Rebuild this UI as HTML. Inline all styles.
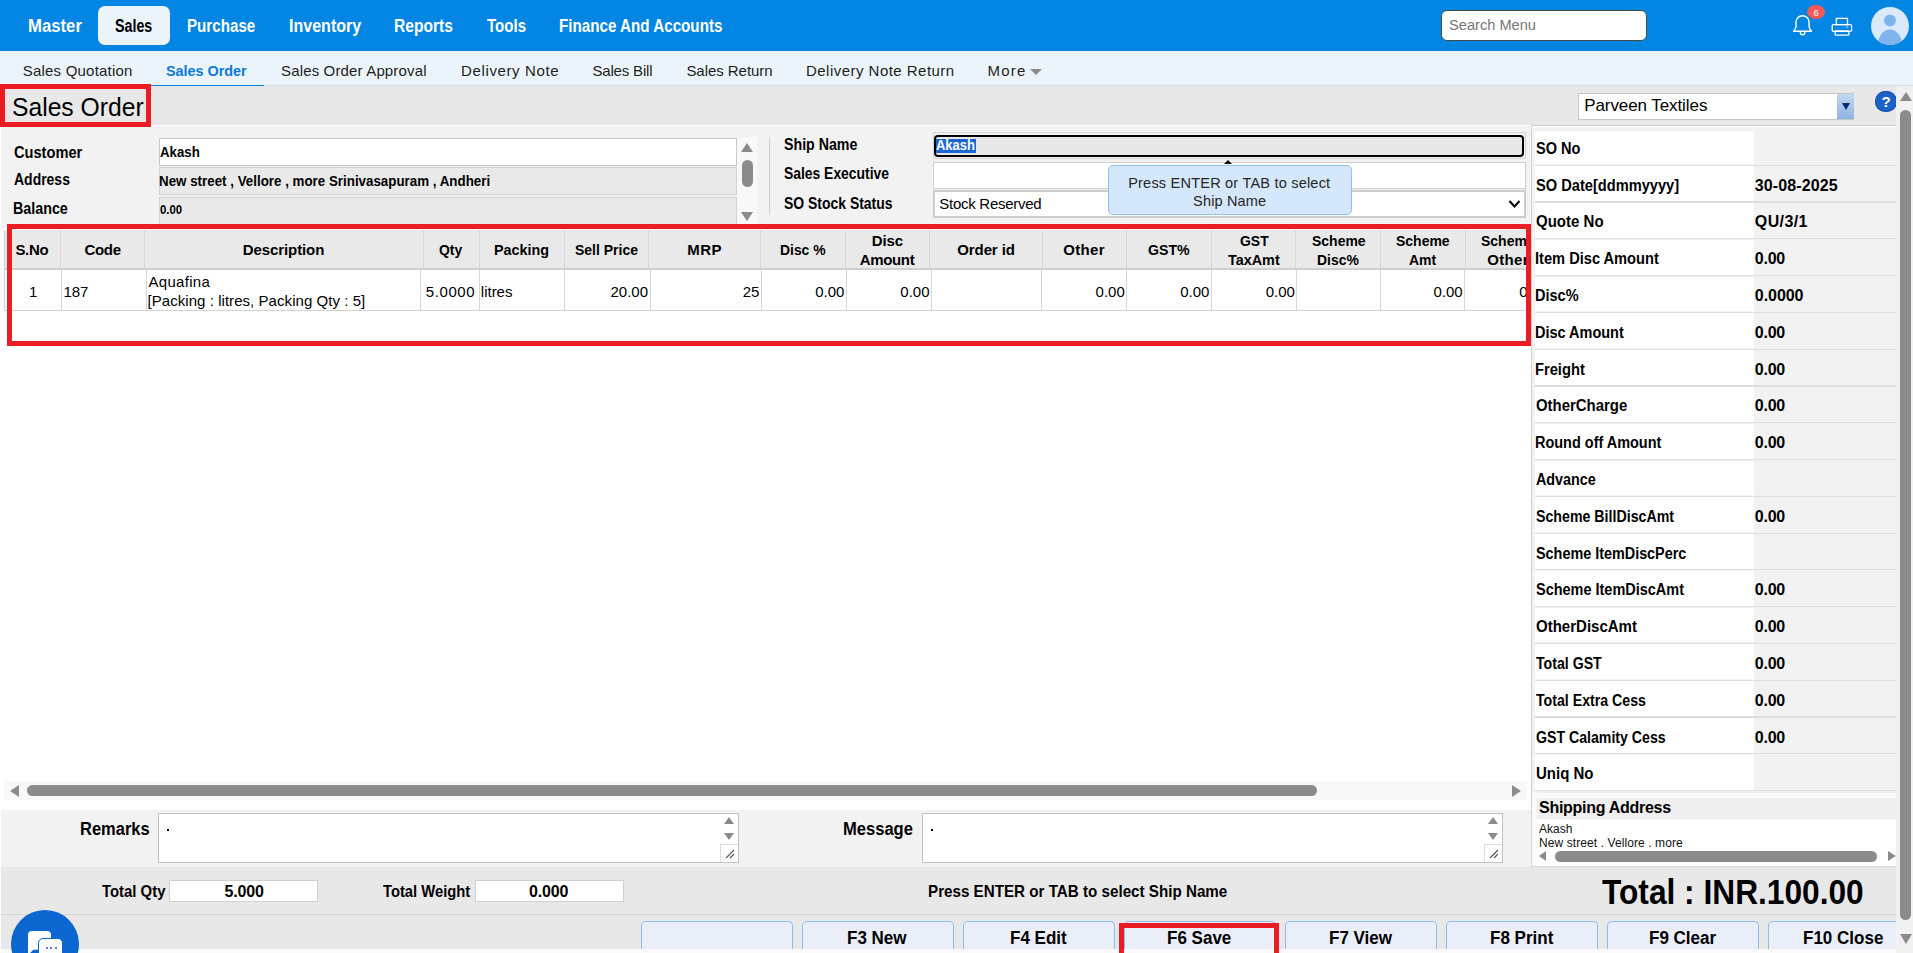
<!DOCTYPE html>
<html><head><meta charset="utf-8"><title>Sales Order</title>
<style>
html,body{margin:0;padding:0;width:1913px;height:953px;overflow:hidden;background:#fff;font-family:'Liberation Sans',sans-serif;}
#root{position:relative;width:1913px;height:953px;overflow:hidden;}
#root div,#root svg{position:absolute;box-sizing:border-box;}
.t{position:absolute;white-space:pre;line-height:1;}
</style></head><body><div id="root">
<div style="left:0px;top:0px;width:1913px;height:51px;background:#0285e3"></div>
<div style="left:98px;top:6px;width:72px;height:39px;background:#ebf3fb;border-radius:7px"></div>
<span class="t" style="left:27.57px;top:17.00px;font:700 18px/1 'Liberation Sans';color:#fff;transform:scaleX(0.9295);transform-origin:0 0;">Master</span>
<span class="t" style="left:115.40px;top:17.00px;font:700 18px/1 'Liberation Sans';color:#000;transform:scaleX(0.7931);transform-origin:0 0;">Sales</span>
<span class="t" style="left:187.06px;top:17.00px;font:700 18px/1 'Liberation Sans';color:#fff;transform:scaleX(0.8422);transform-origin:0 0;">Purchase</span>
<span class="t" style="left:288.81px;top:17.00px;font:700 18px/1 'Liberation Sans';color:#fff;transform:scaleX(0.8912);transform-origin:0 0;">Inventory</span>
<span class="t" style="left:394.13px;top:17.00px;font:700 18px/1 'Liberation Sans';color:#fff;transform:scaleX(0.8657);transform-origin:0 0;">Reports</span>
<span class="t" style="left:487.00px;top:17.00px;font:700 18px/1 'Liberation Sans';color:#fff;transform:scaleX(0.8360);transform-origin:0 0;">Tools</span>
<span class="t" style="left:559.16px;top:17.00px;font:700 18px/1 'Liberation Sans';color:#fff;transform:scaleX(0.8438);transform-origin:0 0;">Finance And Accounts</span>
<div style="left:1441px;top:10px;width:206px;height:31px;background:#fff;border:1px solid #3d4d45;border-radius:6px"></div>
<span class="t" style="left:1448.60px;top:17.00px;font:400 15.5px/1 'Liberation Sans';color:#767676;transform:scaleX(0.9435);transform-origin:0 0;">Search Menu</span>
<svg style="left:1790px;top:12px" width="26" height="26" viewBox="0 0 26 26"><path d="M3.6 19.2 L21.6 19.2 Q19.3 16.8 19.1 14.5 L19.1 10.2 A6.55 6.55 0 0 0 6.0 10.2 L6.0 14.5 Q5.8 16.8 3.6 19.2 Z" fill="none" stroke="#fff" stroke-width="1.45" stroke-linejoin="round"/><path d="M10.4 19.6 L10.4 20.6 A2.2 2.2 0 0 0 14.8 20.6 L14.8 19.6" fill="none" stroke="#fff" stroke-width="1.4"/></svg>
<div style="left:1807px;top:4.8px;width:18px;height:14px;background:#f25858;border-radius:50%"></div>
<span class="t" style="left:1813.50px;top:8.00px;font:400 9.5px/1 'Liberation Sans';color:#fff;">6</span>
<svg style="left:1831px;top:17px" width="22" height="20" viewBox="0 0 22 20"><rect x="5.3" y="1.4" width="11.2" height="6.2" fill="none" stroke="#fff" stroke-width="1.3"/><rect x="1.2" y="7.6" width="19.4" height="6.8" rx="1.5" fill="none" stroke="#fff" stroke-width="1.3"/><rect x="4.2" y="13.9" width="13.6" height="4.3" rx="0.8" fill="none" stroke="#fff" stroke-width="1.3"/><rect x="15.2" y="9.4" width="2" height="1.2" fill="#fff" opacity="0.7"/></svg>
<div style="left:1871px;top:6.7px;width:38px;height:38px;border-radius:50%;overflow:hidden;background:#dae9fb"><svg style="left:0;top:0" width="38" height="38" viewBox="0 0 38 38"><circle cx="19" cy="13.5" r="5.9" fill="#7fb4ee"/><ellipse cx="19" cy="37.5" rx="12" ry="15" fill="#7fb4ee"/></svg></div>
<div style="left:0px;top:51px;width:1913px;height:35px;background:#ecf4fb;border-bottom:1px solid #d2dde8"></div>
<div style="left:151px;top:84.6px;width:113px;height:2.8px;background:#0a84e2"></div>
<span class="t" style="left:22.80px;top:63.00px;font:400 15px/1 'Liberation Sans';color:#1e1e1e;letter-spacing:0.200px;">Sales Quotation</span>
<span class="t" style="left:166.20px;top:63.00px;font:700 15px/1 'Liberation Sans';color:#0a7ad9;transform:scaleX(0.9576);transform-origin:0 0;">Sales Order</span>
<span class="t" style="left:281.00px;top:63.00px;font:400 15px/1 'Liberation Sans';color:#1e1e1e;letter-spacing:0.154px;">Sales Order Approval</span>
<span class="t" style="left:461.00px;top:63.00px;font:400 15px/1 'Liberation Sans';color:#1e1e1e;letter-spacing:0.634px;">Delivery Note</span>
<span class="t" style="left:592.40px;top:63.00px;font:400 15px/1 'Liberation Sans';color:#1e1e1e;letter-spacing:-0.162px;">Sales Bill</span>
<span class="t" style="left:686.40px;top:63.00px;font:400 15px/1 'Liberation Sans';color:#1e1e1e;letter-spacing:-0.043px;">Sales Return</span>
<span class="t" style="left:806.00px;top:63.00px;font:400 15px/1 'Liberation Sans';color:#1e1e1e;letter-spacing:0.470px;">Delivery Note Return</span>
<span class="t" style="left:987.50px;top:63.00px;font:400 15px/1 'Liberation Sans';color:#1e1e1e;letter-spacing:1.222px;">More</span>
<div style="left:1030px;top:68.5px;width:0px;height:0px;border-left:6.5px solid transparent;border-right:6.5px solid transparent;border-top:6px solid #8c8c8c"></div>
<div style="left:0px;top:86px;width:1896px;height:39px;background:#e8e8e8"></div>
<span class="t" style="left:12.35px;top:94.00px;font:400 26px/1 'Liberation Sans';color:#000;transform:scaleX(0.9488);transform-origin:0 0;">Sales Order</span>
<div style="left:1578px;top:92.5px;width:276px;height:27px;background:#fff;border:1px solid #c6c6c6"></div>
<div style="left:1837px;top:93.5px;width:16.5px;height:25.5px;background:linear-gradient(#c2d8f1,#8db4e2)"></div>
<div style="left:1841.6px;top:103px;width:0px;height:0px;border-left:4.0px solid transparent;border-right:4.0px solid transparent;border-top:7px solid #0c2a6e"></div>
<span class="t" style="left:1584.20px;top:97.00px;font:400 17px/1 'Liberation Sans';color:#000;letter-spacing:-0.082px;">Parveen Textiles</span>
<div style="left:1875.2px;top:90.6px;width:21.4px;height:21.4px;background:#1d62c6;border-radius:50%;box-shadow:inset 0 0 0 1px #1652ad"></div>
<span class="t" style="left:1881.50px;top:94.00px;font:700 15px/1 'Liberation Sans';color:#fff;">?</span>
<div style="left:1px;top:125.5px;width:1530px;height:102px;background:#f2f2f2"></div>
<div style="left:159px;top:138px;width:578px;height:27.5px;background:#fff;border:1px solid #c9c9c9"></div>
<div style="left:159px;top:167.3px;width:578px;height:27.3px;background:#e9e9e9;border:1px solid #d3d3d3"></div>
<div style="left:159px;top:196.5px;width:578px;height:31px;background:#e9e9e9;border:1px solid #d3d3d3"></div>
<div style="left:737px;top:136.6px;width:20px;height:91px;background:#f8f8f8"></div>
<div style="left:741.4px;top:143.2px;width:0px;height:0px;border-left:6.15px solid transparent;border-right:6.15px solid transparent;border-bottom:9.5px solid #8b8b8b"></div>
<div style="left:742px;top:160px;width:11px;height:27px;background:#8b8b8b;border-radius:5.5px"></div>
<div style="left:741.4px;top:212.3px;width:0px;height:0px;border-left:6.15px solid transparent;border-right:6.15px solid transparent;border-top:9.2px solid #8b8b8b"></div>
<div style="left:768.5px;top:136.6px;width:1px;height:78px;background:#cfcfcf"></div>
<span class="t" style="left:13.50px;top:145.00px;font:700 16px/1 'Liberation Sans';color:#000;transform:scaleX(0.9133);transform-origin:0 0;">Customer</span>
<span class="t" style="left:13.50px;top:172.00px;font:700 16px/1 'Liberation Sans';color:#000;transform:scaleX(0.8733);transform-origin:0 0;">Address</span>
<span class="t" style="left:12.61px;top:201.00px;font:700 16px/1 'Liberation Sans';color:#000;transform:scaleX(0.8930);transform-origin:0 0;">Balance</span>
<span class="t" style="left:159.60px;top:144.00px;font:700 15px/1 'Liberation Sans';color:#000;transform:scaleX(0.8828);transform-origin:0 0;">Akash</span>
<span class="t" style="left:158.71px;top:173.00px;font:700 15px/1 'Liberation Sans';color:#000;transform:scaleX(0.8900);transform-origin:0 0;">New street , Vellore , more Srinivasapuram , Andheri</span>
<span class="t" style="left:159.50px;top:204.00px;font:700 12px/1 'Liberation Sans';color:#000;transform:scaleX(0.9459);transform-origin:0 0;">0.00</span>
<span class="t" style="left:783.90px;top:137.00px;font:700 16px/1 'Liberation Sans';color:#000;transform:scaleX(0.8866);transform-origin:0 0;">Ship Name</span>
<span class="t" style="left:783.90px;top:166.00px;font:700 16px/1 'Liberation Sans';color:#000;transform:scaleX(0.8673);transform-origin:0 0;">Sales Executive</span>
<span class="t" style="left:783.90px;top:196.00px;font:700 16px/1 'Liberation Sans';color:#000;transform:scaleX(0.8717);transform-origin:0 0;">SO Stock Status</span>
<div style="left:933px;top:132.2px;width:593px;height:27.3px;background:#f2f2f2;border:1px solid #d5d5d5"></div>
<div style="left:934.2px;top:135px;width:590px;height:22.2px;background:#e8e8e8;border:2.5px solid #000;border-radius:4px"></div>
<div style="left:935.7px;top:138.8px;width:40.2px;height:14.6px;background:#1b66d3"></div>
<span class="t" style="left:936.40px;top:137.00px;font:700 15px/1 'Liberation Sans';color:#fff;transform:scaleX(0.8649);transform-origin:0 0;">Akash</span>
<div style="left:933px;top:162px;width:593px;height:26.5px;background:#fff;border:1px solid #cfcfcf"></div>
<div style="left:933px;top:190.3px;width:593px;height:27.5px;background:#fff;border:2px solid #cdcdcd"></div>
<span class="t" style="left:939.30px;top:196.00px;font:400 15px/1 'Liberation Sans';color:#000;letter-spacing:-0.272px;">Stock Reserved</span>
<svg style="left:1508px;top:199px" width="13" height="10" viewBox="0 0 13 10"><polyline points="1.5,2 6.5,7.5 11.5,2" fill="none" stroke="#000" stroke-width="2"/></svg>
<div style="left:1107.5px;top:165.2px;width:244px;height:50.3px;background:#d5e7fb;border:1px solid #8fc3ee;border-radius:5px"></div>
<div style="left:1224.4px;top:160.2px;width:0px;height:0px;border-left:4.75px solid transparent;border-right:4.75px solid transparent;border-bottom:4.8px solid #000"></div>
<span class="t" style="left:1128.20px;top:176.00px;font:400 14.5px/1 'Liberation Sans';color:#262626;letter-spacing:0.218px;">Press ENTER or TAB to select</span>
<span class="t" style="left:1193.10px;top:194.00px;font:400 14.5px/1 'Liberation Sans';color:#262626;letter-spacing:0.167px;">Ship Name</span>
<div style="left:1px;top:227.5px;width:1530px;height:553.5px;background:#fff"></div>
<div style="left:4px;top:229.5px;width:1521.5px;height:40px;background:#e9e9e9;border-bottom:2px solid #cfcfcf;border-left:1px solid #d2d2d2"></div>
<div style="left:60px;top:229.5px;width:1px;height:38px;background:#d6d6d6"></div>
<div style="left:144px;top:229.5px;width:1px;height:38px;background:#d6d6d6"></div>
<div style="left:423px;top:229.5px;width:1px;height:38px;background:#d6d6d6"></div>
<div style="left:479px;top:229.5px;width:1px;height:38px;background:#d6d6d6"></div>
<div style="left:564px;top:229.5px;width:1px;height:38px;background:#d6d6d6"></div>
<div style="left:648px;top:229.5px;width:1px;height:38px;background:#d6d6d6"></div>
<div style="left:760px;top:229.5px;width:1px;height:38px;background:#d6d6d6"></div>
<div style="left:845px;top:229.5px;width:1px;height:38px;background:#d6d6d6"></div>
<div style="left:929px;top:229.5px;width:1px;height:38px;background:#d6d6d6"></div>
<div style="left:1042px;top:229.5px;width:1px;height:38px;background:#d6d6d6"></div>
<div style="left:1126px;top:229.5px;width:1px;height:38px;background:#d6d6d6"></div>
<div style="left:1211px;top:229.5px;width:1px;height:38px;background:#d6d6d6"></div>
<div style="left:1295px;top:229.5px;width:1px;height:38px;background:#d6d6d6"></div>
<div style="left:1380px;top:229.5px;width:1px;height:38px;background:#d6d6d6"></div>
<div style="left:1465px;top:229.5px;width:1px;height:38px;background:#d6d6d6"></div>
<div style="left:4px;top:269.5px;width:1521.5px;height:41.5px;border-bottom:1px solid #d2d2d2;border-left:1px solid #d2d2d2"></div>
<div style="left:61px;top:269.5px;width:1px;height:41px;background:#d6d6d6"></div>
<div style="left:146px;top:269.5px;width:1px;height:41px;background:#d6d6d6"></div>
<div style="left:420px;top:269.5px;width:1px;height:41px;background:#d6d6d6"></div>
<div style="left:479px;top:269.5px;width:1px;height:41px;background:#d6d6d6"></div>
<div style="left:564px;top:269.5px;width:1px;height:41px;background:#d6d6d6"></div>
<div style="left:650px;top:269.5px;width:1px;height:41px;background:#d6d6d6"></div>
<div style="left:761px;top:269.5px;width:1px;height:41px;background:#d6d6d6"></div>
<div style="left:846px;top:269.5px;width:1px;height:41px;background:#d6d6d6"></div>
<div style="left:931px;top:269.5px;width:1px;height:41px;background:#d6d6d6"></div>
<div style="left:1041px;top:269.5px;width:1px;height:41px;background:#d6d6d6"></div>
<div style="left:1126px;top:269.5px;width:1px;height:41px;background:#d6d6d6"></div>
<div style="left:1211px;top:269.5px;width:1px;height:41px;background:#d6d6d6"></div>
<div style="left:1296px;top:269.5px;width:1px;height:41px;background:#d6d6d6"></div>
<div style="left:1380px;top:269.5px;width:1px;height:41px;background:#d6d6d6"></div>
<div style="left:1464px;top:269.5px;width:1px;height:41px;background:#d6d6d6"></div>
<span class="t" style="left:15.40px;top:242.00px;font:700 15px/1 'Liberation Sans';color:#000;letter-spacing:-0.302px;">S.No</span>
<span class="t" style="left:84.45px;top:242.00px;font:700 15px/1 'Liberation Sans';color:#000;letter-spacing:-0.286px;">Code</span>
<span class="t" style="left:242.85px;top:242.00px;font:700 15px/1 'Liberation Sans';color:#000;letter-spacing:-0.105px;">Description</span>
<span class="t" style="left:439.37px;top:242.00px;font:700 15px/1 'Liberation Sans';color:#000;transform:scaleX(0.9300);transform-origin:0 0;">Qty</span>
<span class="t" style="left:494.09px;top:242.00px;font:700 15px/1 'Liberation Sans';color:#000;transform:scaleX(0.9563);transform-origin:0 0;">Packing</span>
<span class="t" style="left:574.95px;top:242.00px;font:700 15px/1 'Liberation Sans';color:#000;transform:scaleX(0.9330);transform-origin:0 0;">Sell Price</span>
<span class="t" style="left:687.35px;top:242.00px;font:700 15px/1 'Liberation Sans';color:#000;letter-spacing:0.386px;">MRP</span>
<span class="t" style="left:779.82px;top:242.00px;font:700 15px/1 'Liberation Sans';color:#000;transform:scaleX(0.9258);transform-origin:0 0;">Disc %</span>
<span class="t" style="left:871.75px;top:233.00px;font:700 15px/1 'Liberation Sans';color:#000;letter-spacing:-0.081px;">Disc</span>
<span class="t" style="left:859.70px;top:252.00px;font:700 15px/1 'Liberation Sans';color:#000;letter-spacing:-0.332px;">Amount</span>
<span class="t" style="left:957.30px;top:242.00px;font:700 15px/1 'Liberation Sans';color:#000;letter-spacing:-0.112px;">Order id</span>
<span class="t" style="left:1063.30px;top:242.00px;font:700 15px/1 'Liberation Sans';color:#000;letter-spacing:0.308px;">Other</span>
<span class="t" style="left:1148.00px;top:242.00px;font:700 15px/1 'Liberation Sans';color:#000;transform:scaleX(0.9445);transform-origin:0 0;">GST%</span>
<span class="t" style="left:1239.64px;top:233.00px;font:700 15px/1 'Liberation Sans';color:#000;transform:scaleX(0.9300);transform-origin:0 0;">GST</span>
<span class="t" style="left:1228.05px;top:252.00px;font:700 15px/1 'Liberation Sans';color:#000;transform:scaleX(0.9591);transform-origin:0 0;">TaxAmt</span>
<span class="t" style="left:1311.75px;top:233.00px;font:700 15px/1 'Liberation Sans';color:#000;transform:scaleX(0.9320);transform-origin:0 0;">Scheme</span>
<span class="t" style="left:1317.16px;top:252.00px;font:700 15px/1 'Liberation Sans';color:#000;transform:scaleX(0.9300);transform-origin:0 0;">Disc%</span>
<span class="t" style="left:1396.15px;top:233.00px;font:700 15px/1 'Liberation Sans';color:#000;transform:scaleX(0.9320);transform-origin:0 0;">Scheme</span>
<span class="t" style="left:1409.24px;top:252.00px;font:700 15px/1 'Liberation Sans';color:#000;transform:scaleX(0.9300);transform-origin:0 0;">Amt</span>
<span class="t" style="left:1481.35px;top:233.00px;font:700 15px/1 'Liberation Sans';color:#000;transform:scaleX(0.9320);transform-origin:0 0;">Scheme</span>
<span class="t" style="left:1487.30px;top:252.00px;font:700 15px/1 'Liberation Sans';color:#000;letter-spacing:0.308px;">Other</span>
<span class="t" style="left:29.00px;top:284.00px;font:400 15px/1 'Liberation Sans';color:#000;">1</span>
<span class="t" style="left:63.40px;top:284.00px;font:400 15px/1 'Liberation Sans';color:#000;">187</span>
<span class="t" style="left:148.50px;top:274.00px;font:400 15px/1 'Liberation Sans';color:#000;letter-spacing:0.304px;">Aquafina</span>
<span class="t" style="left:147.50px;top:293.00px;font:400 15px/1 'Liberation Sans';color:#000;letter-spacing:0.054px;">[Packing : litres, Packing Qty : 5]</span>
<span class="t" style="left:425.80px;top:284.00px;font:400 15px/1 'Liberation Sans';color:#000;letter-spacing:0.593px;">5.0000</span>
<span class="t" style="left:480.80px;top:284.00px;font:400 15px/1 'Liberation Sans';color:#000;">litres</span>
<span class="t" style="left:610.51px;top:284.00px;font:400 15px/1 'Liberation Sans';color:#000;">20.00</span>
<span class="t" style="left:742.66px;top:284.00px;font:400 15px/1 'Liberation Sans';color:#000;">25</span>
<span class="t" style="left:815.15px;top:284.00px;font:400 15px/1 'Liberation Sans';color:#000;">0.00</span>
<span class="t" style="left:900.35px;top:284.00px;font:400 15px/1 'Liberation Sans';color:#000;">0.00</span>
<span class="t" style="left:1095.55px;top:284.00px;font:400 15px/1 'Liberation Sans';color:#000;">0.00</span>
<span class="t" style="left:1180.25px;top:284.00px;font:400 15px/1 'Liberation Sans';color:#000;">0.00</span>
<span class="t" style="left:1265.65px;top:284.00px;font:400 15px/1 'Liberation Sans';color:#000;">0.00</span>
<span class="t" style="left:1433.45px;top:284.00px;font:400 15px/1 'Liberation Sans';color:#000;">0.00</span>
<span class="t" style="left:1519.15px;top:284.00px;font:400 15px/1 'Liberation Sans';color:#000;">0.00</span>
<div style="left:7px;top:224.2px;width:1524px;height:121.5px;border:5px solid #ec1c24"></div>
<div style="left:4px;top:781px;width:1523px;height:19px;background:#f8f8f8"></div>
<div style="left:9.6px;top:785px;width:0px;height:0px;border-top:6.0px solid transparent;border-bottom:6.0px solid transparent;border-right:9.6px solid #8b8b8b"></div>
<div style="left:27px;top:785.2px;width:1290px;height:10.8px;background:#8b8b8b;border-radius:5.4px"></div>
<div style="left:1511.7px;top:784.8px;width:0px;height:0px;border-top:6.1px solid transparent;border-bottom:6.1px solid transparent;border-left:9.9px solid #8b8b8b"></div>
<div style="left:1px;top:809.5px;width:1530px;height:57px;background:#f2f2f2"></div>
<span class="t" style="left:79.58px;top:820.00px;font:700 18px/1 'Liberation Sans';color:#000;transform:scaleX(0.9155);transform-origin:0 0;">Remarks</span>
<span class="t" style="left:842.98px;top:820.00px;font:700 18px/1 'Liberation Sans';color:#000;transform:scaleX(0.9196);transform-origin:0 0;">Message</span>
<div style="left:158px;top:813px;width:581px;height:50px;background:#fff;border:1px solid #c2c2c2"></div>
<div style="left:166.5px;top:829px;width:2.2px;height:2.2px;background:#000"></div>
<div style="left:723.7px;top:816.5px;width:0px;height:0px;border-left:5.3px solid transparent;border-right:5.3px solid transparent;border-bottom:7.8px solid #8b8b8b"></div>
<div style="left:723.7px;top:833px;width:0px;height:0px;border-left:5.3px solid transparent;border-right:5.3px solid transparent;border-top:7.8px solid #8b8b8b"></div>
<div style="left:719.7px;top:843.6px;width:18.3px;height:18.4px;border-left:1px solid #dedede;border-top:1px solid #dedede"></div>
<svg style="left:724px;top:848px" width="12" height="12" viewBox="0 0 12 12"><line x1="2" y1="10" x2="10" y2="2" stroke="#555" stroke-width="1.1"/><line x1="6" y1="10" x2="10" y2="6" stroke="#555" stroke-width="1.1"/></svg>
<div style="left:922px;top:813px;width:581px;height:50px;background:#fff;border:1px solid #c2c2c2"></div>
<div style="left:930.5px;top:829px;width:2.2px;height:2.2px;background:#000"></div>
<div style="left:1487.7px;top:816.5px;width:0px;height:0px;border-left:5.3px solid transparent;border-right:5.3px solid transparent;border-bottom:7.8px solid #8b8b8b"></div>
<div style="left:1487.7px;top:833px;width:0px;height:0px;border-left:5.3px solid transparent;border-right:5.3px solid transparent;border-top:7.8px solid #8b8b8b"></div>
<div style="left:1483.7px;top:843.6px;width:18.3px;height:18.4px;border-left:1px solid #dedede;border-top:1px solid #dedede"></div>
<svg style="left:1488px;top:848px" width="12" height="12" viewBox="0 0 12 12"><line x1="2" y1="10" x2="10" y2="2" stroke="#555" stroke-width="1.1"/><line x1="6" y1="10" x2="10" y2="6" stroke="#555" stroke-width="1.1"/></svg>
<div style="left:1px;top:866.5px;width:1895px;height:48px;background:#e8e8e8"></div>
<div style="left:1px;top:914px;width:1895px;height:1px;background:#d3d3d3"></div>
<span class="t" style="left:102.00px;top:884.00px;font:700 16px/1 'Liberation Sans';color:#000;transform:scaleX(0.9304);transform-origin:0 0;">Total Qty</span>
<div style="left:169.2px;top:879.5px;width:149px;height:22px;background:#fff;border:1px solid #d0d0d0"></div>
<span class="t" style="left:224.60px;top:884.00px;font:700 16px/1 'Liberation Sans';color:#000;letter-spacing:-0.185px;">5.000</span>
<span class="t" style="left:382.70px;top:884.00px;font:700 16px/1 'Liberation Sans';color:#000;transform:scaleX(0.9225);transform-origin:0 0;">Total Weight</span>
<div style="left:474.5px;top:879.5px;width:149px;height:22px;background:#fff;border:1px solid #d0d0d0"></div>
<span class="t" style="left:529.00px;top:884.00px;font:700 16px/1 'Liberation Sans';color:#000;letter-spacing:-0.185px;">0.000</span>
<span class="t" style="left:927.81px;top:883.00px;font:700 17px/1 'Liberation Sans';color:#000;transform:scaleX(0.8933);transform-origin:0 0;">Press ENTER or TAB to select Ship Name</span>
<span class="t" style="left:1602.00px;top:874.00px;font:700 35px/1 'Liberation Sans';color:#000;transform:scaleX(0.9051);transform-origin:0 0;">Total : INR.100.00</span>
<div style="left:1px;top:915px;width:1895px;height:34px;background:#e8e8e8"></div>
<div style="left:0px;top:949px;width:1913px;height:4px;background:#f9f9f9"></div>
<div style="left:641px;top:921px;width:152px;height:28px;background:#eaeef8;border:1px solid #8abdf0;border-bottom:none;border-radius:5px 5px 0 0"></div>
<div style="left:802px;top:921px;width:152px;height:28px;background:#eaeef8;border:1px solid #8abdf0;border-bottom:none;border-radius:5px 5px 0 0"></div>
<span class="t" style="left:847.28px;top:929.00px;font:700 18px/1 'Liberation Sans';color:#000;transform:scaleX(0.9450);transform-origin:0 0;">F3 New</span>
<div style="left:963px;top:921px;width:152px;height:28px;background:#eaeef8;border:1px solid #8abdf0;border-bottom:none;border-radius:5px 5px 0 0"></div>
<span class="t" style="left:1010.17px;top:929.00px;font:700 18px/1 'Liberation Sans';color:#000;transform:scaleX(0.9450);transform-origin:0 0;">F4 Edit</span>
<div style="left:1124px;top:921px;width:152px;height:28px;background:#eaeef8;border:1px solid #8abdf0;border-bottom:none;border-radius:5px 5px 0 0"></div>
<span class="t" style="left:1167.38px;top:929.00px;font:700 18px/1 'Liberation Sans';color:#000;transform:scaleX(0.9450);transform-origin:0 0;">F6 Save</span>
<div style="left:1285px;top:921px;width:152px;height:28px;background:#eaeef8;border:1px solid #8abdf0;border-bottom:none;border-radius:5px 5px 0 0"></div>
<span class="t" style="left:1328.54px;top:929.00px;font:700 18px/1 'Liberation Sans';color:#000;transform:scaleX(0.9450);transform-origin:0 0;">F7 View</span>
<div style="left:1446px;top:921px;width:152px;height:28px;background:#eaeef8;border:1px solid #8abdf0;border-bottom:none;border-radius:5px 5px 0 0"></div>
<span class="t" style="left:1489.86px;top:929.00px;font:700 18px/1 'Liberation Sans';color:#000;transform:scaleX(0.9450);transform-origin:0 0;">F8 Print</span>
<div style="left:1607px;top:921px;width:152px;height:28px;background:#eaeef8;border:1px solid #8abdf0;border-bottom:none;border-radius:5px 5px 0 0"></div>
<span class="t" style="left:1648.97px;top:929.00px;font:700 18px/1 'Liberation Sans';color:#000;transform:scaleX(0.9450);transform-origin:0 0;">F9 Clear</span>
<div style="left:1768px;top:921px;width:152px;height:28px;background:#eaeef8;border:1px solid #8abdf0;border-bottom:none;border-radius:5px 5px 0 0"></div>
<span class="t" style="left:1803.35px;top:929.00px;font:700 18px/1 'Liberation Sans';color:#000;transform:scaleX(0.9450);transform-origin:0 0;">F10 Close</span>
<div style="left:1119px;top:923px;width:160px;height:35px;border:5px solid #ec1c24"></div>
<div style="left:11px;top:910px;width:68px;height:68px;background:#0b66d0;border-radius:50%"></div>
<div style="left:27.8px;top:931.4px;width:23px;height:30px;background:#fff;border-radius:4px"></div>
<div style="left:38.2px;top:938.2px;width:24.5px;height:22px;background:#fff;border:1.4px solid #0b66d0;border-radius:5px"></div>
<div style="left:45.5px;top:947.2px;width:2px;height:2px;background:#4a4fc8;border-radius:50%"></div>
<div style="left:50.2px;top:947.2px;width:2px;height:2px;background:#4a4fc8;border-radius:50%"></div>
<div style="left:55px;top:947.2px;width:2px;height:2px;background:#4a4fc8;border-radius:50%"></div>
<svg style="left:26px;top:945px" width="14" height="8" viewBox="0 0 14 8"><polygon points="4,8 7.4,4.8 12.6,4.8 12.6,8" fill="#0b66d0"/></svg>
<div style="left:1531px;top:125px;width:365px;height:741.5px;background:#f2f2f2;border-left:1px solid #d2d2d2;border-top:1px solid #cfcfcf"></div>
<div style="left:1532px;top:126px;width:364px;height:2px;background:#f9f9f9"></div>
<div style="left:1535.4px;top:131.3px;width:218.8px;height:32.900000000000006px;background:#fff"></div>
<div style="left:1535.4px;top:164.60000000000002px;width:360.6px;height:1.2px;background:#dedede"></div>
<span class="t" style="left:1535.50px;top:141.00px;font:700 16px/1 'Liberation Sans';color:#000;transform:scaleX(0.9080);transform-origin:0 0;">SO No</span>
<div style="left:1535.4px;top:166.20000000000002px;width:218.8px;height:34.78999999999999px;background:#fff"></div>
<div style="left:1535.4px;top:201.39000000000001px;width:360.6px;height:1.2px;background:#dedede"></div>
<span class="t" style="left:1535.50px;top:178.00px;font:700 16px/1 'Liberation Sans';color:#000;transform:scaleX(0.9144);transform-origin:0 0;">SO Date[ddmmyyyy]</span>
<span class="t" style="left:1754.80px;top:178.00px;font:700 16px/1 'Liberation Sans';color:#000;letter-spacing:0.117px;">30-08-2025</span>
<div style="left:1535.4px;top:202.99px;width:218.8px;height:34.79000000000002px;background:#fff"></div>
<div style="left:1535.4px;top:238.18000000000004px;width:360.6px;height:1.2px;background:#dedede"></div>
<span class="t" style="left:1535.50px;top:214.00px;font:700 16px/1 'Liberation Sans';color:#000;transform:scaleX(0.9388);transform-origin:0 0;">Quote No</span>
<span class="t" style="left:1754.80px;top:214.00px;font:700 16px/1 'Liberation Sans';color:#000;letter-spacing:0.402px;">QU/3/1</span>
<div style="left:1535.4px;top:239.78000000000003px;width:218.8px;height:34.789999999999964px;background:#fff"></div>
<div style="left:1535.4px;top:274.96999999999997px;width:360.6px;height:1.2px;background:#dedede"></div>
<span class="t" style="left:1534.59px;top:251.00px;font:700 16px/1 'Liberation Sans';color:#000;transform:scaleX(0.9139);transform-origin:0 0;">Item Disc Amount</span>
<span class="t" style="left:1754.80px;top:251.00px;font:700 16px/1 'Liberation Sans';color:#000;letter-spacing:-0.247px;">0.00</span>
<div style="left:1535.4px;top:276.57px;width:218.8px;height:34.79000000000002px;background:#fff"></div>
<div style="left:1535.4px;top:311.76px;width:360.6px;height:1.2px;background:#dedede"></div>
<span class="t" style="left:1534.59px;top:288.00px;font:700 16px/1 'Liberation Sans';color:#000;transform:scaleX(0.9082);transform-origin:0 0;">Disc%</span>
<span class="t" style="left:1754.80px;top:288.00px;font:700 16px/1 'Liberation Sans';color:#000;letter-spacing:-0.048px;">0.0000</span>
<div style="left:1535.4px;top:313.36px;width:218.8px;height:34.79000000000002px;background:#fff"></div>
<div style="left:1535.4px;top:348.55px;width:360.6px;height:1.2px;background:#dedede"></div>
<span class="t" style="left:1534.60px;top:325.00px;font:700 16px/1 'Liberation Sans';color:#000;transform:scaleX(0.9050);transform-origin:0 0;">Disc Amount</span>
<span class="t" style="left:1754.80px;top:325.00px;font:700 16px/1 'Liberation Sans';color:#000;letter-spacing:-0.247px;">0.00</span>
<div style="left:1535.4px;top:350.15000000000003px;width:218.8px;height:34.789999999999964px;background:#fff"></div>
<div style="left:1535.4px;top:385.34px;width:360.6px;height:1.2px;background:#dedede"></div>
<span class="t" style="left:1534.58px;top:362.00px;font:700 16px/1 'Liberation Sans';color:#000;transform:scaleX(0.9185);transform-origin:0 0;">Freight</span>
<span class="t" style="left:1754.80px;top:362.00px;font:700 16px/1 'Liberation Sans';color:#000;letter-spacing:-0.247px;">0.00</span>
<div style="left:1535.4px;top:386.94px;width:218.8px;height:34.789999999999964px;background:#fff"></div>
<div style="left:1535.4px;top:422.12999999999994px;width:360.6px;height:1.2px;background:#dedede"></div>
<span class="t" style="left:1535.50px;top:398.00px;font:700 16px/1 'Liberation Sans';color:#000;transform:scaleX(0.9326);transform-origin:0 0;">OtherCharge</span>
<span class="t" style="left:1754.80px;top:398.00px;font:700 16px/1 'Liberation Sans';color:#000;letter-spacing:-0.247px;">0.00</span>
<div style="left:1535.4px;top:423.72999999999996px;width:218.8px;height:34.79000000000008px;background:#fff"></div>
<div style="left:1535.4px;top:458.92px;width:360.6px;height:1.2px;background:#dedede"></div>
<span class="t" style="left:1534.60px;top:435.00px;font:700 16px/1 'Liberation Sans';color:#000;transform:scaleX(0.9038);transform-origin:0 0;">Round off Amount</span>
<span class="t" style="left:1754.80px;top:435.00px;font:700 16px/1 'Liberation Sans';color:#000;letter-spacing:-0.247px;">0.00</span>
<div style="left:1535.4px;top:460.52000000000004px;width:218.8px;height:34.789999999999964px;background:#fff"></div>
<div style="left:1535.4px;top:495.71px;width:360.6px;height:1.2px;background:#dedede"></div>
<span class="t" style="left:1535.50px;top:472.00px;font:700 16px/1 'Liberation Sans';color:#000;transform:scaleX(0.8967);transform-origin:0 0;">Advance</span>
<div style="left:1535.4px;top:497.31px;width:218.8px;height:34.78999999999991px;background:#fff"></div>
<div style="left:1535.4px;top:532.4999999999999px;width:360.6px;height:1.2px;background:#dedede"></div>
<span class="t" style="left:1535.50px;top:509.00px;font:700 16px/1 'Liberation Sans';color:#000;transform:scaleX(0.8869);transform-origin:0 0;">Scheme BillDiscAmt</span>
<span class="t" style="left:1754.80px;top:509.00px;font:700 16px/1 'Liberation Sans';color:#000;letter-spacing:-0.247px;">0.00</span>
<div style="left:1535.4px;top:534.0999999999999px;width:218.8px;height:34.79000000000008px;background:#fff"></div>
<div style="left:1535.4px;top:569.29px;width:360.6px;height:1.2px;background:#dedede"></div>
<span class="t" style="left:1535.50px;top:546.00px;font:700 16px/1 'Liberation Sans';color:#000;transform:scaleX(0.8990);transform-origin:0 0;">Scheme ItemDiscPerc</span>
<div style="left:1535.4px;top:570.89px;width:218.8px;height:34.789999999999964px;background:#fff"></div>
<div style="left:1535.4px;top:606.0799999999999px;width:360.6px;height:1.2px;background:#dedede"></div>
<span class="t" style="left:1535.50px;top:582.00px;font:700 16px/1 'Liberation Sans';color:#000;transform:scaleX(0.9045);transform-origin:0 0;">Scheme ItemDiscAmt</span>
<span class="t" style="left:1754.80px;top:582.00px;font:700 16px/1 'Liberation Sans';color:#000;letter-spacing:-0.247px;">0.00</span>
<div style="left:1535.4px;top:607.68px;width:218.8px;height:34.789999999999964px;background:#fff"></div>
<div style="left:1535.4px;top:642.8699999999999px;width:360.6px;height:1.2px;background:#dedede"></div>
<span class="t" style="left:1535.50px;top:619.00px;font:700 16px/1 'Liberation Sans';color:#000;transform:scaleX(0.9386);transform-origin:0 0;">OtherDiscAmt</span>
<span class="t" style="left:1754.80px;top:619.00px;font:700 16px/1 'Liberation Sans';color:#000;letter-spacing:-0.247px;">0.00</span>
<div style="left:1535.4px;top:644.4699999999999px;width:218.8px;height:34.789999999999964px;background:#fff"></div>
<div style="left:1535.4px;top:679.6599999999999px;width:360.6px;height:1.2px;background:#dedede"></div>
<span class="t" style="left:1535.50px;top:656.00px;font:700 16px/1 'Liberation Sans';color:#000;transform:scaleX(0.8835);transform-origin:0 0;">Total GST</span>
<span class="t" style="left:1754.80px;top:656.00px;font:700 16px/1 'Liberation Sans';color:#000;letter-spacing:-0.247px;">0.00</span>
<div style="left:1535.4px;top:681.2599999999999px;width:218.8px;height:34.79000000000008px;background:#fff"></div>
<div style="left:1535.4px;top:716.4499999999999px;width:360.6px;height:1.2px;background:#dedede"></div>
<span class="t" style="left:1535.50px;top:693.00px;font:700 16px/1 'Liberation Sans';color:#000;transform:scaleX(0.8850);transform-origin:0 0;">Total Extra Cess</span>
<span class="t" style="left:1754.80px;top:693.00px;font:700 16px/1 'Liberation Sans';color:#000;letter-spacing:-0.247px;">0.00</span>
<div style="left:1535.4px;top:718.05px;width:218.8px;height:34.789999999999964px;background:#fff"></div>
<div style="left:1535.4px;top:753.2399999999999px;width:360.6px;height:1.2px;background:#dedede"></div>
<span class="t" style="left:1535.50px;top:730.00px;font:700 16px/1 'Liberation Sans';color:#000;transform:scaleX(0.8833);transform-origin:0 0;">GST Calamity Cess</span>
<span class="t" style="left:1754.80px;top:730.00px;font:700 16px/1 'Liberation Sans';color:#000;letter-spacing:-0.247px;">0.00</span>
<div style="left:1535.4px;top:754.8399999999999px;width:218.8px;height:34.789999999999964px;background:#fff"></div>
<div style="left:1535.4px;top:790.0299999999999px;width:360.6px;height:1.2px;background:#dedede"></div>
<span class="t" style="left:1535.50px;top:766.00px;font:700 16px/1 'Liberation Sans';color:#000;transform:scaleX(0.9375);transform-origin:0 0;">Uniq No</span>
<div style="left:1532px;top:792.5px;width:364px;height:74px;background:#fafafa"></div>
<div style="left:1537px;top:798.3px;width:359px;height:20.6px;background:#efefef"></div>
<span class="t" style="left:1539.00px;top:800.00px;font:700 16px/1 'Liberation Sans';color:#000;letter-spacing:-0.280px;">Shipping Address</span>
<div style="left:1537px;top:818.9px;width:359px;height:47.6px;background:#fff"></div>
<span class="t" style="left:1539.00px;top:823.00px;font:400 12px/1 'Liberation Sans';color:#111;">Akash</span>
<span class="t" style="left:1539.00px;top:837.00px;font:400 12px/1 'Liberation Sans';color:#111;letter-spacing:0.088px;">New street . Vellore . more</span>
<div style="left:1539px;top:851.2px;width:0px;height:0px;border-top:5.4px solid transparent;border-bottom:5.4px solid transparent;border-right:7.8px solid #8b8b8b"></div>
<div style="left:1555px;top:851px;width:321.5px;height:10.9px;background:#8b8b8b;border-radius:5.5px"></div>
<div style="left:1887.5px;top:851.2px;width:0px;height:0px;border-top:5.4px solid transparent;border-bottom:5.4px solid transparent;border-left:8.5px solid #8b8b8b"></div>
<div style="left:1896px;top:86px;width:17px;height:867px;background:#f1f1f1"></div>
<div style="left:1899.8px;top:92px;width:0px;height:0px;border-left:6.0px solid transparent;border-right:6.0px solid transparent;border-bottom:9.6px solid #8b8b8b"></div>
<div style="left:1900px;top:109.5px;width:11px;height:810px;background:#8b8b8b;border-radius:5.5px"></div>
<div style="left:1899.8px;top:934px;width:0px;height:0px;border-left:6.0px solid transparent;border-right:6.0px solid transparent;border-top:10px solid #8b8b8b"></div>
<div style="left:0px;top:84px;width:151px;height:43px;border:5px solid #ec1c24"></div>
<div style="left:1531px;top:866px;width:365px;height:1px;background:#d6d6d6"></div>
</div></body></html>
